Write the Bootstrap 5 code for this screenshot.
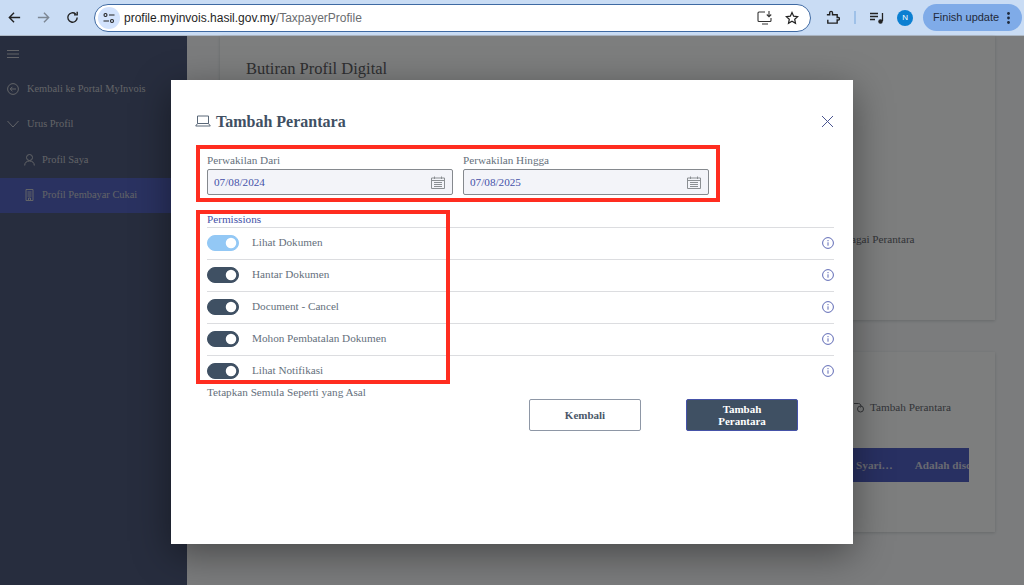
<!DOCTYPE html>
<html lang="ms">
<head>
  <meta charset="UTF-8" />
  <meta name="viewport" content="width=device-width, initial-scale=1" />
  <title>Tambah Perantara</title>
  <link href="https://cdn.jsdelivr.net/npm/bootstrap@5.3.0/dist/css/bootstrap.min.css" rel="stylesheet" />
  <style>
    html, body { height: 585px; overflow: hidden; }
    body { font-family: "Liberation Serif", serif; font-size: 11.2px; background: #f6f9fb; }

    /* browser bar */
    .chrome-bar { height: 36px; background: #c9dcf4; border-bottom: 1px solid #aeb9c6; font-family: "Liberation Sans", sans-serif; padding: 0 2px 0 7px; }
    .chrome-btn { width: 15px; height: 15px; flex: none; }
    .gap-nav { margin-left: 14px; }
    .addr-bar { width: 718px; height: 28px; margin-left: 14px; background: #fff; border: 1.5px solid #3f6aa3; border-radius: 14px; padding: 0 11px 0 3px; font-size: 12px; color: #1f1f1f; }
    .addr-tune { width: 22px; height: 22px; border-radius: 50%; background: #d3e3fd; margin-right: 4px; }
    .addr-path { color: #6a6d70; }
    .star-gap { margin-left: 12px; }
    .ext-gap { margin-left: 14px; }
    .avatar-dot { width: 16px; height: 16px; border-radius: 50%; background: #0b7fd1; color: #fff; font-size: 8px; margin-left: 13px; }
    .update-pill { width: 99px; height: 27px; border-radius: 14px; background: #7fabe8; color: #1f2a3a; font-size: 11px; padding-left: 10px; margin-left: 10px; }
    .kebab-dots { margin-right: 12px; }
    .sep-bar { width: 2px; height: 13px; background: #9fc1e8; }

    /* page behind the dialog */
    .app-area { height: 549px; position: relative; }
    .side-nav { width: 187px; background: #4e5a7c; color: #c4c7ce; font-size: 10.4px; }
    .nav-line { height: 35.5px; padding-left: 7px; gap: 8px; }
    .nav-line.sub-line { padding-left: 24px; gap: 7px; }
    .nav-line.on { background: #5565c2; }
    .burger-line { height: 35px; padding-left: 7px; }
    .page-main { padding-left: 33px; padding-right: 29px; }
    .bg-panel { background: #fbfcfd; box-shadow: 0 1px 3px rgba(0, 0, 0, .16); }
    .panel-top { height: 284px; padding: 23px 26px 0; font-size: 16.5px; line-height: 20px; color: #5e6063; }
    .panel-low { height: 180px; margin-top: 32px; }
    .panel-note { color: #666a70; font-size: 11.2px; line-height: 13px; }
    .note-one { margin-top: 154px; padding-left: 590px; white-space: nowrap; }
    .note-two { padding: 49px 0 0 633px; white-space: nowrap; gap: 5px; }
    .blue-strip { margin: 34px 26px 0 0; height: 34px; background: #5060c4; color: #d0d3e2; font-weight: 700; justify-content: flex-end; overflow: hidden; gap: 22px; white-space: nowrap; }
    .strip-cut { margin-right: -2px; }
    .dim-layer { position: absolute; inset: 0; background: rgba(0, 0, 0, .5); }

    /* dialog */
    .dlg-box { position: absolute; left: 171px; top: 44px; width: 682px; height: 464px; background: #fff; border: 0; border-radius: 0; box-shadow: 0 10px 36px rgba(0, 0, 0, .42); padding: 0 19px 0 36px; color: #65707c; }
    .dlg-head { height: 65px; padding-top: 30px; margin-left: -12px; }
    .dlg-head svg { position: relative; top: 1px; }
    .dlg-title { font-size: 16px; font-weight: 700; color: #3f5063; margin: 0 0 0 5px; line-height: 1; }
    .dlg-close { width: 13px; height: 13px; margin-left: auto; }
    .date-lbl { line-height: 13px; margin: 9px 0 2px; }
    .date-box { width: 246px; height: 26px; background: #f3f4f9; border: 1px solid #85898e; border-radius: 2px; color: #4552a8; padding: 0 7px 0 6px; }
    .perm-head { color: #4552a8; margin-top: 16px; line-height: 16px; }
    .perm-row { height: 32px; padding: 0 0 2px; border-top: 1px solid #dcdde0; }
    .perm-row .form-check-input { width: 32px; height: 16px; margin: 0 13px 0 0; float: none; background-color: #3f5063; border-color: #3f5063; box-shadow: none; }
    .perm-row .form-check-input.soft-on { background-color: #93c8f5; border-color: #93c8f5; opacity: 1; }
    .perm-row.last-row { height: 30px; padding-bottom: 0; }
    .reset-txt { line-height: 13px; margin-top: 1px; }
    .dlg-btns { padding-left: 322px; gap: 45px; margin-top: 0; }
    .dlg-btn { width: 112px; height: 32px; padding: 0; font-size: 11px; font-weight: 700; line-height: 12px; border-radius: 2px; font-family: inherit; }
    .btn-back { background: #fff; border: 1px solid #8e97a6; color: #4b5869; }
    .btn-add { background: #3f5063; border: 1px solid #4552a8; color: #fff; }
    .red-mark { position: absolute; border: 4px solid #ff2d20; pointer-events: none; }
    .mark-one { left: 25px; top: 65px; width: 524px; height: 57px; }
    .mark-two { left: 25px; top: 130px; width: 254px; height: 174px; }
  </style>
</head>
<body>
  <div class="chrome-bar d-flex align-items-center">
    <svg class="chrome-btn" viewBox="0 0 16 16" fill="none" stroke="#222" stroke-width="1.5"><path d="M14 8H2.5M7.5 3 2.5 8l5 5"/></svg>
    <svg class="chrome-btn gap-nav" viewBox="0 0 16 16" fill="none" stroke="#7d8794" stroke-width="1.5"><path d="M2 8h11.500M8.500 3l5 5-5 5"/></svg>
    <svg class="chrome-btn gap-nav" viewBox="0 0 16 16" fill="none" stroke="#222" stroke-width="1.5"><path d="M13 8a5 5 0 1 1-1.600-3.700M13 1.800v3.400H9.600"/></svg>
    <div class="addr-bar d-flex align-items-center">
      <span class="addr-tune d-flex align-items-center justify-content-center">
        <svg width="12" height="12" viewBox="0 0 12 12" fill="none" stroke="#222" stroke-width="1.1"><circle cx="2.500" cy="3" r="1.500"/><path d="M6 3h5.500M.5 9H6"/><circle cx="9" cy="9" r="1.500"/></svg>
      </span>
      <span>profile.myinvois.hasil.gov.my<span class="addr-path">/TaxpayerProfile</span></span>
      <svg class="ms-auto" width="16" height="15" viewBox="0 0 16 15" fill="none" stroke="#333" stroke-width="1.1"><path d="M8 2H2a1 1 0 0 0-1 1v7.500a1 1 0 0 0 1 1h11a1 1 0 0 0 1-1V8M5 14h6"/><path d="M12 1v5.500M9.800 4.500 12 6.800l2.200-2.300"/></svg>
      <svg class="star-gap" width="14" height="14" viewBox="0 0 16 16" fill="none" stroke="#222" stroke-width="1.4"><path d="m8 1.700 1.900 4.200 4.600.5-3.400 3.100.9 4.600L8 11.800l-4 2.300.9-4.600L1.500 6.400l4.600-.5z"/></svg>
    </div>
    <svg class="ext-gap" width="15" height="15" viewBox="0 0 16 16" fill="none" stroke="#222" stroke-width="1.5"><path d="M2 5h3V3a1.500 1.500 0 0 1 3 0v2h5v3h1.200a1.300 1.300 0 0 1 0 2.600H13V14H3v-3.500"/></svg>
    <span class="sep-bar ext-gap"></span>
    <svg class="ext-gap" width="14" height="12" viewBox="0 0 14 12" fill="none" stroke="#222" stroke-width="1.3"><path d="M0 1.500h8M0 4.500h8M0 7.500h5M12.500 1v8"/><circle cx="10.500" cy="9.500" r="1.600" fill="#222"/></svg>
    <span class="avatar-dot d-flex align-items-center justify-content-center">N</span>
    <div class="update-pill d-flex align-items-center">
      <span>Finish update</span>
      <svg class="ms-auto kebab-dots" width="3" height="12" viewBox="0 0 3 12" fill="#1f2a3a"><circle cx="1.500" cy="1.500" r="1.400"/><circle cx="1.500" cy="6" r="1.400"/><circle cx="1.500" cy="10.500" r="1.400"/></svg>
    </div>
  </div>

  <div class="app-area d-flex">
    <nav class="side-nav flex-shrink-0">
      <div class="burger-line d-flex align-items-center">
        <svg width="12" height="8" viewBox="0 0 12 8" stroke="#c4c7ce" stroke-width="1"><path d="M0 .5h12M0 4h12M0 7.500h12"/></svg>
      </div>
      <div class="nav-line d-flex align-items-center">
        <svg width="12" height="12" viewBox="0 0 12 12" fill="none" stroke="#c4c7ce"><circle cx="6" cy="6" r="5.400"/><path d="M9 6H3.200M5.400 3.800 3.200 6l2.200 2.200"/></svg>
        <span>Kembali ke Portal MyInvois</span>
      </div>
      <div class="nav-line d-flex align-items-center">
        <svg width="12" height="12" viewBox="0 0 12 12" fill="none" stroke="#c4c7ce"><path d="m.5 3 5.500 6 5.500-6"/></svg>
        <span>Urus Profil</span>
      </div>
      <div class="nav-line sub-line d-flex align-items-center">
        <svg width="11" height="12" viewBox="0 0 11 12" fill="none" stroke="#c4c7ce"><circle cx="5.500" cy="3.500" r="3"/><path d="M.7 11.500c0-3 2-4.500 4.800-4.500s4.800 1.500 4.800 4.500"/></svg>
        <span>Profil Saya</span>
      </div>
      <div class="nav-line sub-line on d-flex align-items-center">
        <svg width="11" height="12" viewBox="0 0 11 12" fill="none" stroke="#c4c7ce"><path d="M2 .5h7v11H2zM3.500 3h4M3.500 5h4M3.500 7h4M4.500 11.500V9h2v2.500"/></svg>
        <span>Profil Pembayar Cukai</span>
      </div>
    </nav>

    <main class="page-main flex-grow-1">
      <section class="bg-panel panel-top">
        <div>Butiran Profil Digital</div>
        <div class="panel-note note-one">sebagai Perantara</div>
      </section>
      <section class="bg-panel panel-low">
        <div class="panel-note note-two d-flex align-items-center">
          <svg width="12" height="11" viewBox="0 0 12 11" fill="none" stroke="#666a70"><path d="M1 1.500h4.500a2.500 2.500 0 0 1 2 4"/><circle cx="7.500" cy="7" r="3"/></svg>
          <span>Tambah Perantara</span>
        </div>
        <div class="blue-strip d-flex align-items-center">
          <span>Syari…</span>
          <span class="strip-cut">Adalah disc</span>
        </div>
      </section>
    </main>

    <div class="dim-layer"></div>

    <div class="modal-content dlg-box">
      <div class="dlg-head d-flex align-items-start">
        <svg width="16" height="12" viewBox="0 0 16 12" fill="none" stroke="#5a6878" class="mt-1"><path d="M2.500 1h11v7.500h-11zM2.500 8.500 .7 11h14.600l-1.800-2.500"/></svg>
        <h5 class="dlg-title mt-1">Tambah Perantara</h5>
        <svg class="dlg-close mt-1" viewBox="0 0 13 13" fill="none" stroke="#4a5590"><path d="m1 1 11 11M12 1 1 12"/></svg>
      </div>

      <div class="d-flex gap-2">
        <div style="margin-right:2px">
          <div class="date-lbl">Perwakilan Dari</div>
          <div class="date-box d-flex align-items-center justify-content-between">
            <span>07/08/2024</span>
            <svg width="14" height="13" viewBox="0 0 14 13" fill="none" stroke="#8b8f93"><path d="M.5 2h13v10.500H.5zM.5 4.500h13M3.500.5V3M10.500.5V3M3 6.500h8M3 8.500h8M3 10.500h8"/></svg>
          </div>
        </div>
        <div>
          <div class="date-lbl">Perwakilan Hingga</div>
          <div class="date-box d-flex align-items-center justify-content-between">
            <span>07/08/2025</span>
            <svg width="14" height="13" viewBox="0 0 14 13" fill="none" stroke="#8b8f93"><path d="M.5 2h13v10.500H.5zM.5 4.500h13M3.500.5V3M10.500.5V3M3 6.500h8M3 8.500h8M3 10.500h8"/></svg>
          </div>
        </div>
      </div>

      <div class="perm-head">Permissions</div>
      <div id="permList"></div>
      <div class="reset-txt">Tetapkan Semula Seperti yang Asal</div>

      <div class="dlg-btns d-flex">
        <button type="button" class="btn dlg-btn btn-back">Kembali</button>
        <button type="button" class="btn dlg-btn btn-add">Tambah<br />Perantara</button>
      </div>

      <div class="red-mark mark-one"></div>
      <div class="red-mark mark-two"></div>
    </div>
  </div>

  <script>
    const perms = ['Lihat Dokumen', 'Hantar Dokumen', 'Document - Cancel', 'Mohon Pembatalan Dokumen', 'Lihat Notifikasi'];
    const permList = document.getElementById('permList');
    perms.forEach((nama, i) => {
      const row = document.createElement('div');
      row.className = 'form-switch perm-row d-flex align-items-center' + (i === perms.length - 1 ? ' last-row' : '');
      row.innerHTML = `
        <input class="form-check-input ${i === 0 ? 'soft-on' : ''}" type="checkbox" checked />
        <span>${nama}</span>
        <svg class="ms-auto" width="12" height="12" viewBox="0 0 12 12" fill="none" stroke="#5f6ab5"><circle cx="6" cy="6" r="5.400"/><path d="M6 5.300v3.400M6 3v1.200"/></svg>`;
      permList.appendChild(row);
    });
  </script>
  <script src="https://cdn.jsdelivr.net/npm/bootstrap@5.3.0/dist/js/bootstrap.bundle.min.js"></script>
</body>
</html>
